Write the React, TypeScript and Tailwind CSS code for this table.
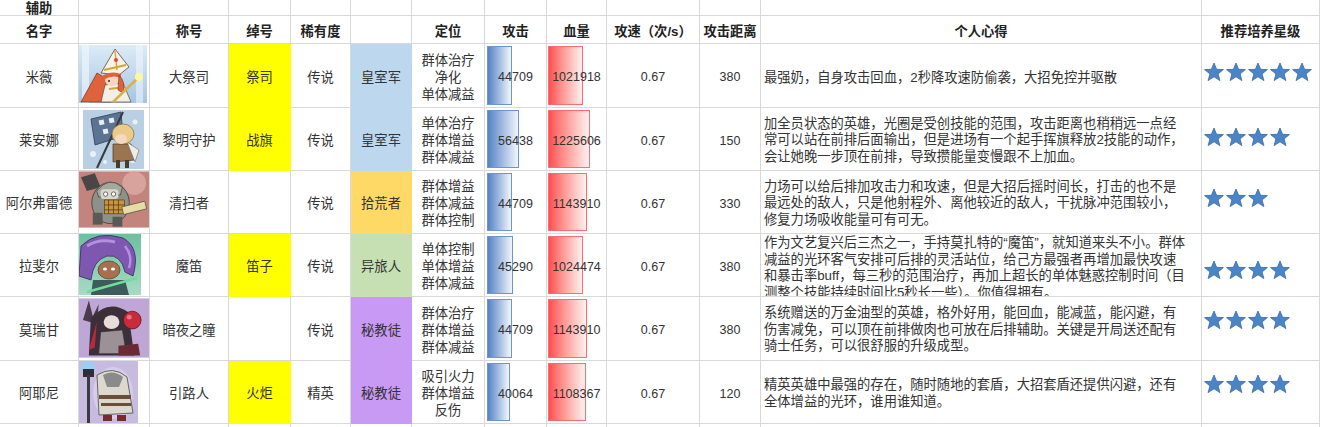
import React from 'react';

const GRID = 'border-[#d9d9d9]';

const Cell = ({ className = '', border = GRID, children }: { className?: string; border?: string; children?: React.ReactNode }) => (
    <div className={`border-r border-b overflow-hidden ${border} ${className}`}>{children}</div>
);

const Star = () => (
    <svg width="20" height="20" viewBox="0 0 20 20" className="shrink-0">
        <polygon
            points="10,1 12.6,7.3 19.4,7.6 14.1,11.9 15.9,18.6 10,14.8 4.1,18.6 5.9,11.9 0.6,7.6 7.4,7.3"
            fill="#4a86c7"
            stroke="#3a6aa2"
            strokeWidth="0.8"
            strokeLinejoin="round"
        />
    </svg>
);

// 头像（简化插画）
const Mivi = () => (
    <svg width="68" height="58" viewBox="0 0 68 58" className="mt-px">
        <defs>
            <linearGradient id="p1bg" x1="0" y1="0" x2="0" y2="1">
                <stop offset="0" stopColor="#dcebf6" />
                <stop offset="1" stopColor="#a6c5e2" />
            </linearGradient>
        </defs>
        <rect width="68" height="58" fill="url(#p1bg)" />
        <rect x="3" width="7" height="58" fill="#eef5fb" opacity="0.7" />
        <rect x="57" width="7" height="58" fill="#eef5fb" opacity="0.6" />
        <path d="M18 28 Q8 46 2 57 L32 57 Q24 46 28 34 Z" fill="#e0623c" stroke="#7a2e1c" strokeWidth="0.7" />
        <path d="M26 40 L44 38 L52 57 L22 57 Z" fill="#f3efe6" stroke="#5a4a3a" strokeWidth="0.7" />
        <path d="M30 44 L46 42" stroke="#d4a43a" strokeWidth="2" />
        <polygon points="22,28 36,4 50,22 40,30" fill="#f6f2e6" stroke="#5a4a3a" strokeWidth="0.8" />
        <path d="M25 25 L47 20" stroke="#d4a43a" strokeWidth="2" />
        <path d="M36 6 L38 25" stroke="#d4a43a" strokeWidth="1.4" />
        <circle cx="37" cy="15" r="2" fill="#d9483a" />
        <ellipse cx="33" cy="35" rx="7" ry="6" fill="#f7d6bf" />
        <path d="M23 31 Q33 25 42 29 L42 33 Q33 29 24 35 Z" fill="#e0623c" />
        <path d="M40 30 Q47 37 44 48 L39 45 Z" fill="#e0623c" stroke="#7a2e1c" strokeWidth="0.6" />
        <circle cx="30" cy="36" r="1" fill="#3a2a2a" />
        <line x1="34" y1="57" x2="61" y2="31" stroke="#d9b04a" strokeWidth="2.5" />
        <circle cx="60" cy="32" r="4" fill="#fff6a0" />
    </svg>
);

const Lyanna = () => (
    <svg width="61" height="59" viewBox="0 0 61 59" className="ml-[4px] mt-[2px]">
        <rect width="61" height="59" fill="#b8cfe4" />
        <circle cx="10" cy="44" r="3" fill="#e8f1f8" />
        <circle cx="52" cy="12" r="2.5" fill="#e8f1f8" />
        <circle cx="50" cy="50" r="3" fill="#e8f1f8" />
        <circle cx="22" cy="52" r="2" fill="#e8f1f8" />
        <polygon points="8,9 38,2 40,26 12,35" fill="#5d7394" stroke="#2f3d52" strokeWidth="0.8" />
        <rect x="16" y="10" width="5" height="5" fill="#e8eef6" transform="rotate(-12 18 12)" />
        <rect x="26" y="8" width="5" height="5" fill="#e8eef6" transform="rotate(-12 28 10)" />
        <rect x="20" y="19" width="5" height="5" fill="#e8eef6" transform="rotate(-12 22 21)" />
        <line x1="14" y1="58" x2="40" y2="2" stroke="#3a3a3a" strokeWidth="2" />
        <path d="M30 34 L48 34 L52 50 L30 52 Z" fill="#9a7550" stroke="#4a3420" strokeWidth="0.7" />
        <path d="M44 32 L56 40 L52 52 Z" fill="#f0ede4" stroke="#6a6a6a" strokeWidth="0.6" />
        <ellipse cx="40" cy="24" rx="11" ry="10" fill="#eacb8c" stroke="#8a6a3a" strokeWidth="0.7" />
        <ellipse cx="38" cy="29" rx="6" ry="5" fill="#f5d8c0" />
        <rect x="33" y="50" width="4" height="8" fill="#4a3a2a" />
        <rect x="42" y="50" width="4" height="8" fill="#4a3a2a" />
    </svg>
);

const Alfred = () => (
    <svg width="71" height="57" viewBox="0 0 71 57">
        <rect width="71" height="57" fill="#c4847e" />
        <circle cx="56" cy="12" r="12" fill="#d8a39c" />
        <polygon points="2,6 16,2 22,16 8,20" fill="#4a4646" />
        <ellipse cx="32" cy="32" rx="19" ry="21" fill="#8e918a" stroke="#3a3a3a" strokeWidth="0.8" />
        <path d="M18 20 Q30 4 44 16 L42 24 L20 26 Z" fill="#a5a89f" stroke="#3a3a3a" strokeWidth="0.7" />
        <rect x="22" y="18" width="18" height="10" rx="3" fill="#d9d6cc" />
        <circle cx="27" cy="23" r="2.2" fill="#fff" stroke="#222" strokeWidth="0.6" />
        <circle cx="35" cy="23" r="2.2" fill="#fff" stroke="#222" strokeWidth="0.6" />
        <rect x="26" y="29" width="20" height="14" fill="#c8963c" stroke="#4a3018" strokeWidth="0.6" />
        <path d="M30 29 V43 M35 29 V43 M40 29 V43 M26 34 H46 M26 39 H46" stroke="#5a3a1a" strokeWidth="0.8" />
        <rect x="44" y="33" width="24" height="8" fill="#e6dca8" stroke="#5a5030" strokeWidth="0.7" transform="rotate(-14 56 37)" />
        <rect x="14" y="42" width="10" height="12" fill="#5a5a54" />
        <rect x="34" y="46" width="10" height="10" fill="#5a5a54" />
    </svg>
);

const Raphael = () => (
    <svg width="62" height="61" viewBox="0 0 62 61">
        <defs>
            <linearGradient id="p4bg" x1="0" y1="0" x2="0" y2="1">
                <stop offset="0" stopColor="#6cbf9f" />
                <stop offset="1" stopColor="#a6dbc4" />
            </linearGradient>
        </defs>
        <rect width="62" height="61" fill="url(#p4bg)" />
        <path d="M2 12 Q18 -4 44 4 Q62 14 54 42 L46 38 Q42 20 28 22 Q14 26 12 46 L0 42 Z" fill="#7e58b0" stroke="#3a2458" strokeWidth="0.8" />
        <path d="M8 12 Q20 4 36 8" stroke="#b48ee0" strokeWidth="3" fill="none" />
        <path d="M46 12 Q54 22 50 34" stroke="#b48ee0" strokeWidth="2.5" fill="none" />
        <ellipse cx="30" cy="36" rx="11" ry="9" fill="#a8704e" stroke="#4a2a1a" strokeWidth="0.6" />
        <ellipse cx="26" cy="35" rx="2" ry="1.6" fill="#fff" />
        <ellipse cx="34" cy="35" rx="2" ry="1.6" fill="#fff" />
        <path d="M14 46 L46 46 L50 61 L12 61 Z" fill="#3e5a5a" />
        <line x1="8" y1="58" x2="58" y2="44" stroke="#6fdc9c" strokeWidth="2.5" />
    </svg>
);

const Morrigan = () => (
    <svg width="71" height="60" viewBox="0 0 71 60" className="mt-px">
        <rect width="71" height="60" fill="#bea6d6" />
        <polygon points="4,22 10,2 14,18 20,6 18,26" fill="#4a3a4a" />
        <path d="M12 20 Q30 0 50 14 L56 58 L10 58 Z" fill="#3b2f3a" />
        <path d="M18 24 L10 52 L16 50 Z" fill="#b82a3a" />
        <ellipse cx="33" cy="24" rx="8" ry="7" fill="#e8dcd8" />
        <path d="M22 34 L44 32 L48 56 L20 56 Z" fill="#9a9296" stroke="#3a3036" strokeWidth="0.6" />
        <circle cx="54" cy="22" r="9" fill="#c92a3c" stroke="#5a1a1a" strokeWidth="0.8" />
        <circle cx="51" cy="19" r="2.5" fill="#f07080" />
        <path d="M40 48 L60 46 L62 58 L40 58 Z" fill="#6a2a34" />
    </svg>
);

const Ayeni = () => (
    <svg width="59" height="62" viewBox="0 0 59 62">
        <rect width="59" height="62" fill="#c7bbe0" />
        <ellipse cx="34" cy="32" rx="20" ry="26" fill="#d6ccec" />
        <circle cx="9" cy="7" r="7" fill="#8fd2f4" opacity="0.85" />
        <rect x="4" y="8" width="11" height="8" fill="#2e2e36" />
        <rect x="8" y="14" width="3" height="48" fill="#3a3a44" />
        <path d="M18 14 Q34 4 48 16 L54 52 L20 54 Z" fill="#dcd8ce" stroke="#4a4a4a" strokeWidth="0.8" />
        <path d="M24 14 Q34 8 44 16 L40 26 L28 26 Z" fill="#8a8a8a" />
        <rect x="20" y="34" width="32" height="4" fill="#6a4e3a" />
        <rect x="22" y="42" width="30" height="3" fill="#6a4e3a" />
        <rect x="24" y="54" width="9" height="6" fill="#7a2a2a" />
        <rect x="38" y="54" width="9" height="6" fill="#7a2a2a" />
    </svg>
);

type Row = {
    name: string;
    title: string;
    nick: string;
    rarity: string;
    faction: string;
    factionBg: string;
    roles: string[];
    atk: number;
    hp: number;
    range: string;
    notes: string[];
    notesAlign: string;
    stars: number;
    starPad: string;
    portrait: React.ReactNode;
};

const rows: Row[] = [
    {
        name: '米薇', title: '大祭司', nick: '祭司', rarity: '传说', faction: '皇室军',
        factionBg: 'bg-[#bdd7ee] border-[#bdd7ee]', roles: ['群体治疗', '净化', '单体减益'],
        atk: 44709, hp: 1021918, range: '380',
        notes: ['最强奶，自身攻击回血，2秒降攻速防偷袭，大招免控并驱散'],
        notesAlign: 'items-center pt-[6px]', stars: 5, starPad: 'pt-[18px]', portrait: <Mivi />,
    },
    {
        name: '莱安娜', title: '黎明守护', nick: '战旗', rarity: '传说', faction: '皇室军',
        factionBg: 'bg-[#bdd7ee] border-[#bdd7ee]', roles: ['单体治疗', '群体增益', '群体减益'],
        atk: 56438, hp: 1225606, range: '150',
        notes: [
            '加全员状态的英雄，光圈是受创技能的范围，攻击距离也稍稍远一点经',
            '常可以站在前排后面输出，但是进场有一个起手挥旗释放2技能的动作，',
            '会让她晚一步顶在前排，导致攒能量变慢跟不上加血。',
        ],
        notesAlign: 'items-center pt-[3px]', stars: 4, starPad: 'pt-[19px]', portrait: <Lyanna />,
    },
    {
        name: '阿尔弗雷德', title: '清扫者', nick: '', rarity: '传说', faction: '拾荒者',
        factionBg: 'bg-[#ffd966] border-[#ffd966]', roles: ['群体增益', '群体减益', '群体控制'],
        atk: 44709, hp: 1143910, range: '330',
        notes: [
            '力场可以给后排加攻击力和攻速，但是大招后摇时间长，打击的也不是',
            '最远处的敌人，只是他射程外、离他较近的敌人，干扰脉冲范围较小，',
            '修复力场吸收能量可有可无。',
        ],
        notesAlign: 'items-center pt-[3px]', stars: 3, starPad: 'pt-[17px]', portrait: <Alfred />,
    },
    {
        name: '拉斐尔', title: '魔笛', nick: '笛子', rarity: '传说', faction: '异旅人',
        factionBg: 'bg-[#c6e0b4] border-[#c6e0b4]', roles: ['单体控制', '单体增益', '群体减益'],
        atk: 45290, hp: 1024474, range: '380',
        notes: [
            '作为文艺复兴后三杰之一，手持莫扎特的“魔笛”，就知道来头不小。群体',
            '减益的光环客气安排可后排的灵活站位，给己方最强者再增加最快攻速',
            '和暴击率buff，每三秒的范围治疗，再加上超长的单体魅惑控制时间（目',
            '测整个技能持续时间比5秒长一些）。你值得拥有。',
        ],
        notesAlign: 'items-start pt-[1px]', stars: 4, starPad: 'pt-[26px]', portrait: <Raphael />,
    },
    {
        name: '莫瑞甘', title: '暗夜之瞳', nick: '', rarity: '传说', faction: '秘教徒',
        factionBg: 'bg-[#c99af3] border-[#c99af3]', roles: ['群体治疗', '群体增益', '群体减益'],
        atk: 44709, hp: 1143910, range: '380',
        notes: [
            '系统赠送的万金油型的英雄，格外好用，能回血，能减蓝，能闪避，有',
            '伤害减免，可以顶在前排做肉也可放在后排辅助。关键是开局送还配有',
            '骑士任务，可以很舒服的升级成型。',
        ],
        notesAlign: 'items-center pt-[3px]', stars: 4, starPad: 'pt-[13px]', portrait: <Morrigan />,
    },
    {
        name: '阿耶尼', title: '引路人', nick: '火炬', rarity: '精英', faction: '秘教徒',
        factionBg: 'bg-[#c99af3] border-[#c99af3]', roles: ['吸引火力', '群体增益', '反伤'],
        atk: 40064, hp: 1108367, range: '120',
        notes: [
            '精英英雄中最强的存在，随时随地的套盾，大招套盾还提供闪避，还有',
            '全体增益的光环，谁用谁知道。',
        ],
        notesAlign: 'items-center pt-[3px]', stars: 4, starPad: 'pt-[13px]', portrait: <Ayeni />,
    },
];

const headers = ['名字', '', '称号', '绰号', '稀有度', '', '定位', '攻击', '血量', '攻速（次/s）', '攻击距离', '个人心得', '推荐培养星级'];

const ATK_MAX = 56438;
const HP_MAX = 1225606;

const App: React.FC = () => {
    const center = 'flex items-center justify-center text-center pt-[4px]';
    return (
        <main className="w-[1320px] h-[427px] overflow-hidden bg-white text-[#333] text-[13.3px] font-['Liberation_Sans','Noto_Sans_CJK_SC',sans-serif]">
            <div className="grid grid-cols-[79px_71px_79px_62px_60px_61px_73px_62px_60px_93px_61px_441px_118px] grid-rows-[16px_28px_64px_63px_63px_63px_64px_63px_20px]">
                {/* 第一行 */}
                <Cell className="flex items-start justify-center pt-[1px] leading-[16px] font-bold text-[#222]">辅助</Cell>
                {headers.slice(1).map((_, i) => (
                    <Cell key={`r1-${i}`} />
                ))}

                {/* 表头 */}
                {headers.map((h, i) => (
                    <Cell key={`h-${i}`} className="flex items-center justify-center pt-[5px] font-bold text-[#222] whitespace-nowrap">
                        {h}
                    </Cell>
                ))}

                {rows.map(r => (
                    <React.Fragment key={r.name}>
                        <Cell className={`${center} whitespace-nowrap`}>{r.name}</Cell>
                        <Cell className="flex items-start justify-start">{r.portrait}</Cell>
                        <Cell className={center}>{r.title}</Cell>
                        <Cell className={`${center} ${r.nick ? 'bg-[#ffff00]' : ''}`} border={r.nick ? 'border-[#ffff00]' : GRID}>
                            {r.nick}
                        </Cell>
                        <Cell className={center}>{r.rarity}</Cell>
                        <Cell className={center} border={r.factionBg}>{r.faction}</Cell>
                        <Cell className="flex flex-col items-center justify-center pt-[3px] leading-[17px]">
                            {r.roles.map(x => (
                                <span key={x}>{x}</span>
                            ))}
                        </Cell>
                        <Cell className="grid">
                            <div
                                className="col-start-1 row-start-1 justify-self-start self-stretch ml-[2px] my-[2px] border border-[#6b95d0] bg-linear-to-r from-[#5683c4] to-[#f3f6fb]"
                                style={{ width: Math.round((r.atk / ATK_MAX) * 32) }}
                            />
                            <span className="col-start-1 row-start-1 self-center justify-self-center pt-[4px] text-[12.5px]">{r.atk}</span>
                        </Cell>
                        <Cell className="grid">
                            <div
                                className="col-start-1 row-start-1 justify-self-start self-stretch ml-[1px] my-[2px] border border-[#ff6b70] bg-linear-to-r from-[#ff4b52] to-[#fff1f1]"
                                style={{ width: Math.round((r.hp / HP_MAX) * 42) }}
                            />
                            <span className="col-start-1 row-start-1 self-center justify-self-center pt-[4px] text-[12.5px]">{r.hp}</span>
                        </Cell>
                        <Cell className={`${center} text-[12.5px]`}>0.67</Cell>
                        <Cell className={`${center} text-[12.5px]`}>{r.range}</Cell>
                        <Cell className={`flex ${r.notesAlign} pl-[3px] leading-[16.5px]`}>
                            <div className="flex flex-col whitespace-nowrap">
                                {r.notes.map(n => (
                                    <span key={n}>{n}</span>
                                ))}
                            </div>
                        </Cell>
                        <Cell className={`flex items-start justify-start gap-[2px] pl-[2px] ${r.starPad}`}>
                            {Array.from({ length: r.stars }).map((_, i) => (
                                <Star key={i} />
                            ))}
                        </Cell>
                    </React.Fragment>
                ))}

                {headers.map((_, i) => (
                    <Cell key={`tail-${i}`} />
                ))}
            </div>
        </main>
    );
};

export default App;
